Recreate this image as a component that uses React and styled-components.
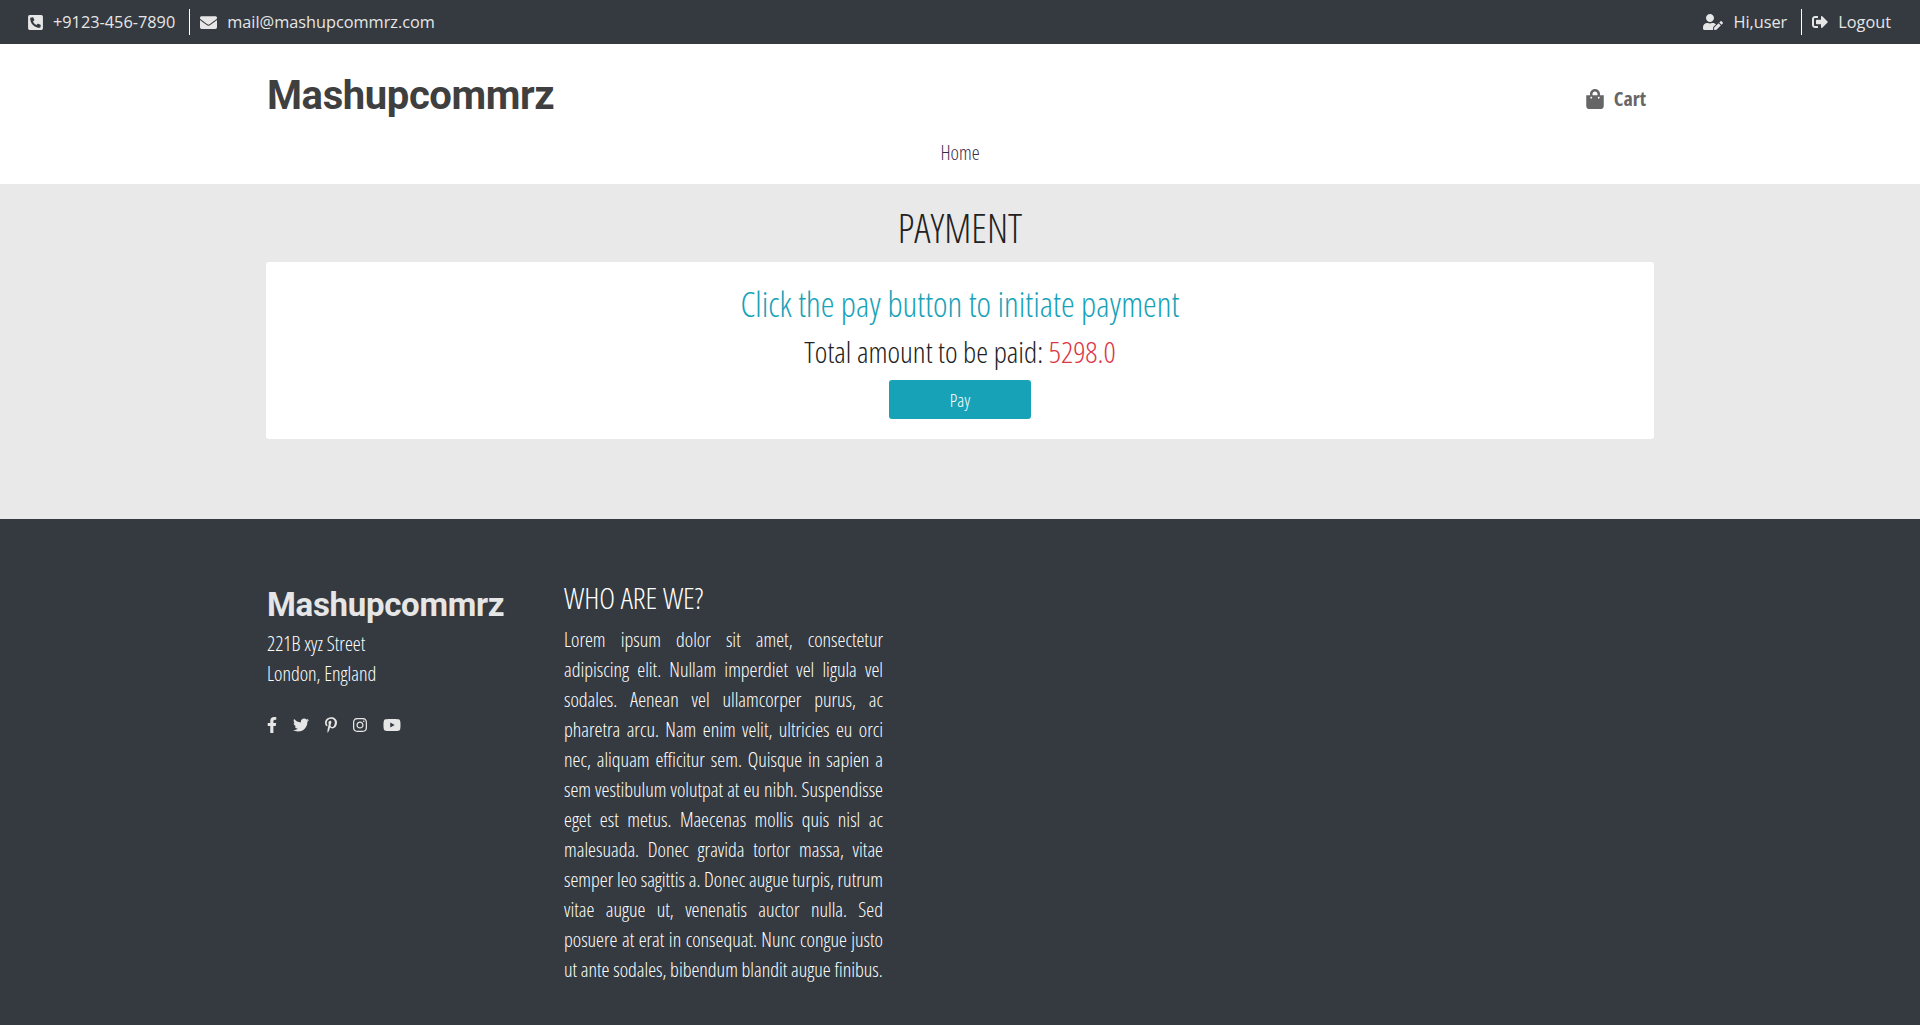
import React from "react";
import styled, { createGlobalStyle } from "styled-components";
import { FaPhoneSquareAlt, FaEnvelope, FaUserEdit, FaSignOutAlt, FaShoppingBag, FaFacebookF, FaTwitter, FaPinterestP, FaInstagram, FaYoutube } from "react-icons/fa";

const Global = createGlobalStyle`
  html, body { margin: 0; padding: 0; background: #fff; }
  * { box-sizing: border-box; }
  body { font-family: "Open Sans", "Noto Sans", sans-serif; }
`;
const sized = (Icon, w, h) => styled(Icon)`width: ${w}px; height: ${h}px; flex: none;`;
const PhoneIcon = sized(FaPhoneSquareAlt, 15, 17);
const MailIcon = sized(FaEnvelope, 17, 17);
const UserIcon = sized(FaUserEdit, 20, 16);
const LogoutIcon = sized(FaSignOutAlt, 16, 16);
const BagIcon = sized(FaShoppingBag, 18, 20);
const FacebookIcon = sized(FaFacebookF, 10, 16);
const TwitterIcon = sized(FaTwitter, 16, 16);
const PinterestIcon = sized(FaPinterestP, 12, 16);
const InstagramIcon = sized(FaInstagram, 14, 16);
const YoutubeIcon = sized(FaYoutube, 18, 16);

const Page = styled.div`display: flex; flex-direction: column; min-height: 1025px;`;
const TopBar = styled.div`
  height: 44px; background: #343a40; color: #e6e6e6; display: flex; justify-content: space-between;
  align-items: center; padding: 0 29px 0 28px; font-size: 16.3px;
`;
const Group = styled.div`display: flex; align-items: center;`;
const TopItem = styled.span`
  display: flex; align-items: center; gap: 10px; height: 26px; padding: 0 14px 0 0;
  & + & { border-left: 1px solid #fff; padding: 0 0 0 10px; }
`;
const Header = styled.header`background: #fff; height: 140px; display: flex; flex-direction: column; align-items: center;`;
const HeaderRow = styled.div`width: 1388px; height: 95px; display: flex; justify-content: space-between; align-items: center; padding: 0 8px 0 1px;`;
const Logo = styled.div`
  font-family: "Roboto", sans-serif; font-weight: 700; color: ${p => p.$light ? "#e6e6e6" : "#3f3f3f"};
  font-size: ${p => p.$light ? "33px" : "40px"}; letter-spacing: ${p => p.$light ? "-0.3px" : "-0.4px"}; line-height: 1.2;
  font-stretch: normal; margin-top: ${p => p.$light ? "6px" : "8px"}; margin-bottom: ${p => p.$light ? "4px" : "0"};
`;
const Cart = styled.div`
  display: flex; align-items: center; gap: 10px; color: #666; font-size: 20px; font-weight: 700; font-stretch: 75%; margin-top: 14px;
`;
const Nav = styled.nav`font-size: 20px; line-height: 27px; font-weight: 300; font-stretch: 75%; color: #3a2a4a;`;
const Main = styled.main`background: #e9e9e9; height: 335px; display: flex; flex-direction: column; align-items: center;`;
const Title = styled.h1`margin: 0; font-size: 40px; height: 78px; line-height: 88px; font-weight: 300; font-stretch: 75%; color: #222;`;
const Card = styled.section`
  width: 1388px; height: 177px; background: #fff; border-radius: 3px; display: flex; flex-direction: column; align-items: center;
  font-weight: 300; font-stretch: 75%;
`;
const Lead = styled.h2`margin: 19px 0 0; font-size: 34.6px; line-height: 46px; font-weight: 300; color: #17a2b8;`;
const Total = styled.p`margin: 5px 0 0; font-size: 30px; line-height: 40px; color: #222;`;
const Amount = styled.span`color: #dc3545;`;
const PayButton = styled.button`
  margin-top: 8px; width: 142px; height: 39px; border: 0; border-radius: 3px; background: #17a2b8; color: #fff;
  font-family: inherit; font-stretch: 75%; font-size: 18px; font-weight: 300;
`;
const Footer = styled.footer`flex: 1; background: #343a40; color: #fff; padding: 59px 0 0 267px; display: flex; font-stretch: 75%;`;
const Brand = styled.div`width: 297px; font-size: 20px; font-weight: 300; line-height: 30px; padding-top: 1px;`;
const Social = styled.div`display: flex; align-items: center; gap: 16px; margin-top: 28px; color: #e6e6e6;`;
const About = styled.div`width: 319px;`;
const AboutTitle = styled.h3`margin: 0 0 7px; font-size: 30px; line-height: 40px; font-weight: 300;`;
const AboutText = styled.p`margin: 0; font-size: 20px; line-height: 30px; font-weight: 330; text-align: justify;`;

export default function App() {
  return (
    <Page>
      <Global />
      <TopBar>
        <Group>
          <TopItem><PhoneIcon />+9123-456-7890</TopItem>
          <TopItem><MailIcon />mail@mashupcommrz.com</TopItem>
        </Group>
        <Group>
          <TopItem><UserIcon />Hi,user</TopItem>
          <TopItem><LogoutIcon />Logout</TopItem>
        </Group>
      </TopBar>
      <Header>
        <HeaderRow>
          <Logo>Mashupcommrz</Logo>
          <Cart><BagIcon />Cart</Cart>
        </HeaderRow>
        <Nav>Home</Nav>
      </Header>
      <Main>
        <Title>PAYMENT</Title>
        <Card>
          <Lead>Click the pay button to initiate payment</Lead>
          <Total>Total amount to be paid: <Amount>5298.0</Amount></Total>
          <PayButton>Pay</PayButton>
        </Card>
      </Main>
      <Footer>
        <Brand>
          <Logo $light>Mashupcommrz</Logo>
          221B xyz Street<br />London, England
          <Social><FacebookIcon /><TwitterIcon /><PinterestIcon /><InstagramIcon /><YoutubeIcon /></Social>
        </Brand>
        <About>
          <AboutTitle>WHO ARE WE?</AboutTitle>
          <AboutText>Lorem ipsum dolor sit amet, consectetur adipiscing elit. Nullam imperdiet vel ligula vel sodales. Aenean vel ullamcorper purus, ac pharetra arcu. Nam enim velit, ultricies eu orci nec, aliquam efficitur sem. Quisque in sapien a sem vestibulum volutpat at eu nibh. Suspendisse eget est metus. Maecenas mollis quis nisl ac malesuada. Donec gravida tortor massa, vitae semper leo sagittis a. Donec augue turpis, rutrum vitae augue ut, venenatis auctor nulla. Sed posuere at erat in consequat. Nunc congue justo ut ante sodales, bibendum blandit augue finibus.</AboutText>
        </About>
      </Footer>
    </Page>
  );
}
